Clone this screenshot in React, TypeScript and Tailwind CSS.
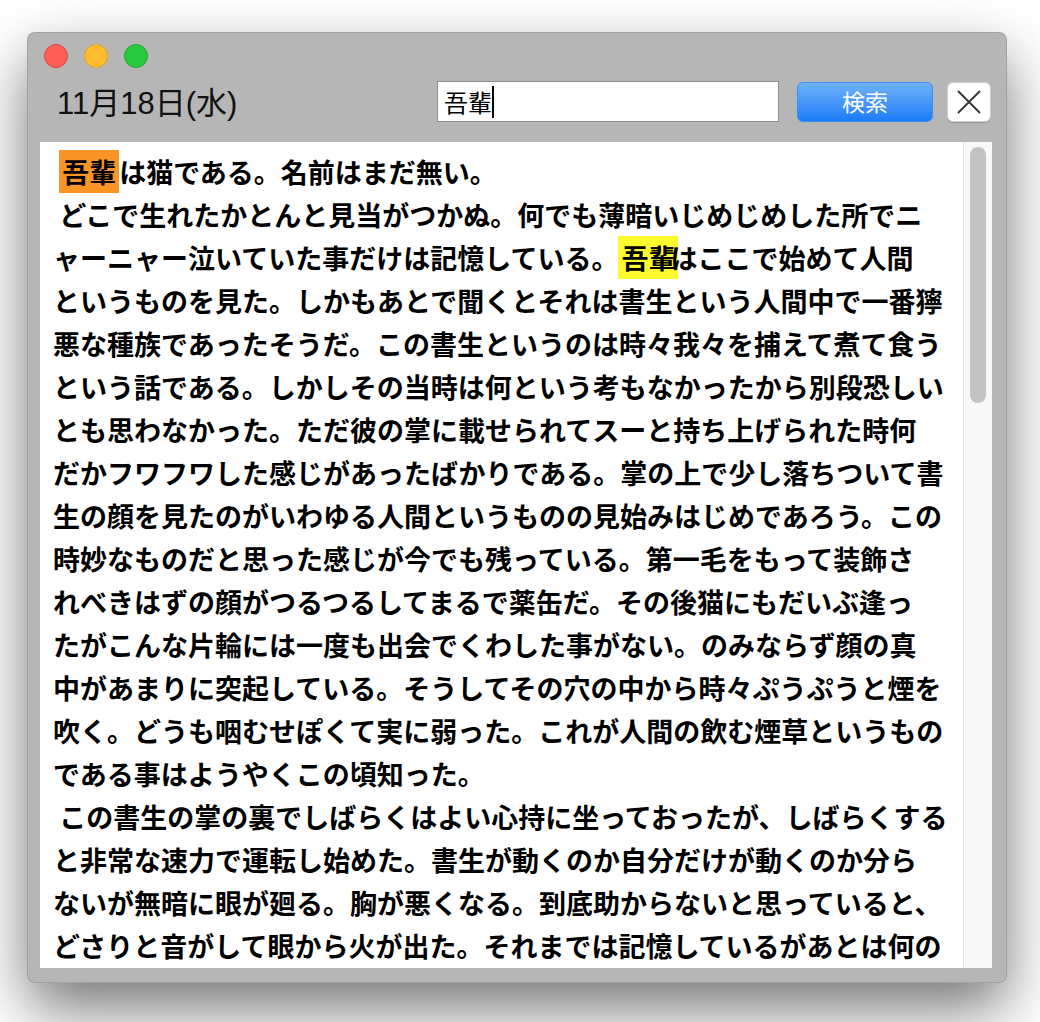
type Piece = { text: string; mark?: "orange" | "yellow" };

const lines: Piece[][] = [
  [{ text: " " }, { text: "吾輩", mark: "orange" }, { text: "は猫である。名前はまだ無い。" }],
  [{ text: " どこで生れたかとんと見当がつかぬ。何でも薄暗いじめじめした所でニ" }],
  [
    { text: "ャーニャー泣いていた事だけは記憶している。" },
    { text: "吾輩", mark: "yellow" },
    { text: "はここで始めて人間" },
  ],
  [{ text: "というものを見た。しかもあとで聞くとそれは書生という人間中で一番獰" }],
  [{ text: "悪な種族であったそうだ。この書生というのは時々我々を捕えて煮て食う" }],
  [{ text: "という話である。しかしその当時は何という考もなかったから別段恐しい" }],
  [{ text: "とも思わなかった。ただ彼の掌に載せられてスーと持ち上げられた時何" }],
  [{ text: "だかフワフワした感じがあったばかりである。掌の上で少し落ちついて書" }],
  [{ text: "生の顔を見たのがいわゆる人間というものの見始みはじめであろう。この" }],
  [{ text: "時妙なものだと思った感じが今でも残っている。第一毛をもって装飾さ" }],
  [{ text: "れべきはずの顔がつるつるしてまるで薬缶だ。その後猫にもだいぶ逢っ" }],
  [{ text: "たがこんな片輪には一度も出会でくわした事がない。のみならず顔の真" }],
  [{ text: "中があまりに突起している。そうしてその穴の中から時々ぷうぷうと煙を" }],
  [{ text: "吹く。どうも咽むせぽくて実に弱った。これが人間の飲む煙草というもの" }],
  [{ text: "である事はようやくこの頃知った。" }],
  [{ text: " この書生の掌の裏でしばらくはよい心持に坐っておったが、しばらくする" }],
  [{ text: "と非常な速力で運転し始めた。書生が動くのか自分だけが動くのか分ら" }],
  [{ text: "ないが無暗に眼が廻る。胸が悪くなる。到底助からないと思っていると、" }],
  [{ text: "どさりと音がして眼から火が出た。それまでは記憶しているがあとは何の" }],
];

function Line({ pieces }: { pieces: Piece[] }) {
  return (
    <div className="whitespace-pre h-[43px] leading-[43px]">
      {pieces.map((p, i) =>
        p.mark ? (
          <span
            key={i}
            className={
              p.mark === "orange"
                ? "bg-[#fb9426] px-[3px] py-[2px]"
                : "bg-[#fdfb30] px-[3px] py-[2px] mr-[-8px]"
            }
          >
            {p.text}
          </span>
        ) : (
          <span key={i}>{p.text}</span>
        )
      )}
    </div>
  );
}

export default function App() {
  return (
    <div className="bg-white w-[1040px] h-[1022px] pl-[28px] pt-[33px] overflow-hidden">
      {/* window */}
      <div className="w-[978px] h-[949px] rounded-[7px] bg-[#b6b6b6] flex flex-col shadow-[0_0_0_1px_#a2a2a2,0_26px_60px_rgba(0,0,0,0.55)]">
        {/* title bar */}
        <div className="flex gap-[16px] pt-[11px] pl-[16px]">
          <div className="w-[24px] h-[24px] rounded-full bg-[#fe5f57] border border-[#e0443e]" />
          <div className="w-[24px] h-[24px] rounded-full bg-[#febc2e] border border-[#dea123]" />
          <div className="w-[24px] h-[24px] rounded-full bg-[#28c840] border border-[#1aab29]" />
        </div>

        {/* toolbar */}
        <div className="mt-[13px] h-[41px] flex items-center pl-[29px] pr-[15px]">
          <div className="flex-1 text-[31px] text-[#111] mt-[5px] font-['Liberation_Sans','Noto_Sans_CJK_JP',sans-serif]">
            11月18日(水)
          </div>
          <div className="w-[342px] h-[41px] bg-white border border-[#8e8e8e] flex items-center pl-[6px] text-[24px] text-black font-['Noto_Sans_CJK_JP',sans-serif]">
            <span>吾輩</span>
            <span className="w-[2px] h-[32px] bg-black" />
          </div>
          <button className="ml-[18px] w-[136px] h-[40px] rounded-[6px] bg-gradient-to-b from-[#6db2fb] to-[#1a7cf8] border border-[#3c8ef5] text-white text-[23px] font-['Noto_Sans_CJK_JP',sans-serif] flex items-center justify-center">
            検索
          </button>
          <button className="ml-[14px] w-[44px] h-[40px] rounded-[6px] bg-white border border-[#cfcfcf] shadow-[0_1px_1px_rgba(0,0,0,0.15)] flex items-center justify-center">
            <svg width="24" height="24" viewBox="0 0 24 24" fill="none" stroke="#333" strokeWidth="1.8" strokeLinecap="round">
              <path d="M1.5 1.5 L22.5 22.5 M22.5 1.5 L1.5 22.5" />
            </svg>
          </button>
        </div>

        {/* content */}
        <div className="mt-[20px] ml-[12px] w-[952px] h-[826px] flex">
          <div className="flex-1 bg-white pl-[13px] pt-[8px] overflow-hidden text-[27px] font-bold text-black font-['Noto_Sans_CJK_JP',sans-serif]">
            {lines.map((l, i) => (
              <Line key={i} pieces={l} />
            ))}
          </div>
          <div className="w-[29px] bg-[#f8f8f8] border-l border-[#e6e6e6] pt-[5px] flex justify-center">
            <div className="w-[16px] h-[256px] rounded-full bg-[#c2c2c2]" />
          </div>
        </div>
      </div>
    </div>
  );
}
